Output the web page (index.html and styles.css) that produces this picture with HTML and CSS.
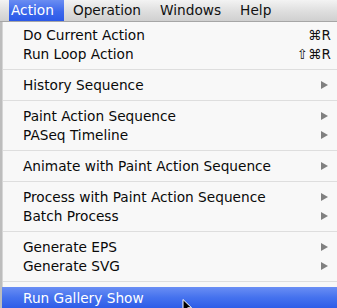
FILE: index.html
```html
<!DOCTYPE html>
<html>
<head>
<meta charset="utf-8">
<link rel="stylesheet" href="styles.css">
</head>
<body>
<div class="menubar">
  <span class="title active">Action</span>
  <span class="title">Operation</span>
  <span class="title">Windows</span>
  <span class="title">Help</span>
</div>
<div class="menu">
  <div class="item"><span class="label">Do Current Action</span><span class="key">⌘R</span></div>
  <div class="item"><span class="label">Run Loop Action</span><span class="key">⇧⌘R</span></div>
  <div class="sep"></div>
  <div class="item"><span class="label">History Sequence</span><span class="arrow"></span></div>
  <div class="sep"></div>
  <div class="item"><span class="label">Paint Action Sequence</span><span class="arrow"></span></div>
  <div class="item"><span class="label">PASeq Timeline</span><span class="arrow"></span></div>
  <div class="sep"></div>
  <div class="item"><span class="label">Animate with Paint Action Sequence</span><span class="arrow"></span></div>
  <div class="sep"></div>
  <div class="item"><span class="label">Process with Paint Action Sequence</span><span class="arrow"></span></div>
  <div class="item"><span class="label">Batch Process</span><span class="arrow"></span></div>
  <div class="sep"></div>
  <div class="item"><span class="label">Generate EPS</span><span class="arrow"></span></div>
  <div class="item"><span class="label">Generate SVG</span><span class="arrow"></span></div>
  <div class="sep"></div>
  <div class="item selected"><span class="label">Run Gallery Show</span></div>
</div>
<svg class="cursor" width="12" height="14" viewBox="0 0 12 14"><path d="M1 0.5 L1 12 L3.8 9.4 L5.8 13.5 L7.6 12.7 L5.7 8.8 L9.6 8.8 Z" fill="#000" stroke="#fff" stroke-width="1"/></svg>
</body>
</html>
```
FILE: styles.css
```css
html, body {
  margin: 0;
  padding: 0;
  width: 337px;
  height: 308px;
  overflow: hidden;
  background: #bdbdbd;
  font-family: "DejaVu Sans", "Noto Sans", sans-serif;
  font-size: 13.7px;
  color: #0a0a0a;
  position: relative;
}
.menubar {
  height: 21px;
  display: flex;
  align-items: stretch;
  padding-left: 9px;
  background: linear-gradient(#f3f3f3, #dcdcdc 60%, #d0d0d0);
  border-bottom: 1px solid #a6a6a6;
}
.title {
  display: flex;
  align-items: center;
  margin-left: 19px;
  line-height: 21px;
  color: #111;
}
.title.active {
  margin-left: 0;
  padding: 0 10px 0 2px;
  color: #fff;
  background: linear-gradient(#6a8df2, #3c68ec 55%, #2b59e8);
}
.title.active + .title {
  margin-left: 9px;
}
.menu {
  margin-left: 2px;
  border-left: 1px solid #d6d6d6;
  background: #f8f8f8;
  padding-top: 3px;
  height: 290px;
}
.item {
  height: 19px;
  display: flex;
  align-items: center;
  justify-content: space-between;
  padding: 0 9px 0 20px;
}
.label {
  white-space: nowrap;
}
.key {
  font-size: 13.5px;
  color: #111;
  margin-right: -3px;
}
.arrow {
  width: 0;
  height: 0;
  border-top: 4px solid transparent;
  border-bottom: 4px solid transparent;
  border-left: 7px solid #808080;
}
.sep {
  height: 12px;
  display: flex;
  align-items: center;
}
.sep::before {
  content: "";
  flex: 1;
  height: 1px;
  background: #dedede;
}
.item.selected {
  height: 21px;
  color: #fff;
  background: linear-gradient(#6a8ef4, #4572ee 50%, #2e5ce8);
  border-bottom: 1px solid #2447c0;
  margin-left: -1px;
  padding-left: 21px;
}
.cursor {
  position: absolute;
  left: 182px;
  top: 299px;
}
```
